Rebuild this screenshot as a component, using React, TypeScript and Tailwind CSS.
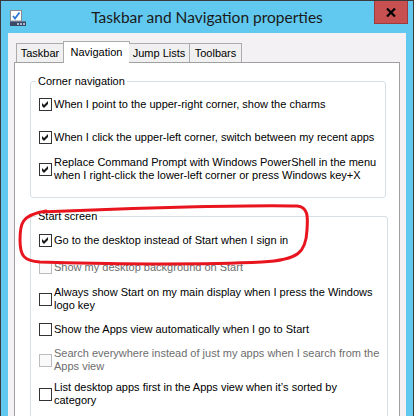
import React from "react";

const FONT = { fontFamily: '"Liberation Sans", Arial, sans-serif' };

function Check({ checked = false, disabled = false }: { checked?: boolean; disabled?: boolean }) {
  return (
    <span
      className={
        disabled
          ? "w-[13px] h-[13px] shrink-0 border border-[#bcbcbc] bg-[#fafafa] flex items-center justify-center"
          : "w-[13px] h-[13px] shrink-0 border border-[#333333] bg-white flex items-center justify-center"
      }
    >
      {checked && (
        <svg width="11" height="11" viewBox="0 0 11 11">
          <polygon points="2,4 4,6 8,2 8,5 4,9 2,7" fill="#1a1a1a" />
        </svg>
      )}
    </span>
  );
}

function Row({
  children,
  checked,
  disabled,
  className,
}: {
  children: React.ReactNode;
  checked?: boolean;
  disabled?: boolean;
  className?: string;
}) {
  return (
    <div className={"flex items-center gap-[2px] " + (className ?? "")}>
      <Check checked={checked} disabled={disabled} />
      <span
        className={
          disabled
            ? "text-[11px] leading-[13px] text-[#6d6d6d] whitespace-nowrap"
            : "text-[11px] leading-[13px] text-black whitespace-nowrap"
        }
      >
        {children}
      </span>
    </div>
  );
}

export default function App() {
  return (
    <div className="relative w-[414px] h-[416px] overflow-hidden" style={FONT}>
      <div className="flex flex-col h-full bg-[#61c8ef] border-x border-t border-[#3a3a3a]">
        {/* Title bar */}
        <div className="h-[32px] grid grid-cols-[1fr_auto_1fr] shrink-0">
          <div className="pl-[9px] pt-[9px]">
            <svg width="16" height="16" viewBox="0 0 16 16">
              <rect x="0.5" y="0.5" width="11" height="10.5" fill="#ffffff" stroke="#8c8c8c" />
              <polyline points="3,6 5,8.5 9.5,2.5" fill="none" stroke="#2b78d4" strokeWidth="1.8" />
              <rect x="0" y="11" width="16" height="5" fill="#3b4a66" />
              <rect x="0" y="11" width="16" height="1" fill="#6a7a96" />
              <rect x="7" y="13" width="2" height="2" fill="#a9b6cc" />
              <rect x="10" y="13" width="2" height="2" fill="#a9b6cc" />
              <rect x="13" y="13" width="2" height="2" fill="#a9b6cc" />
            </svg>
          </div>
          <div
            className="pt-[6px] text-[15.5px] leading-[20px] text-[#1a1a1a] whitespace-nowrap"
            style={{ fontFamily: 'Lato, "Noto Sans", sans-serif' }}
          >
            Taskbar and Navigation properties
          </div>
          <div className="flex justify-end pr-[5px]">
            <div className="w-[34px] h-[23px] bg-[#c75050] border border-[#9b3b3b] border-t-0 flex items-center justify-center">
              <svg width="10" height="9" viewBox="0 0 10 9">
                <path d="M1 0.5 L9 8.5 M9 0.5 L1 8.5" stroke="#000" strokeWidth="2.2" />
              </svg>
            </div>
          </div>
        </div>

        {/* Client */}
        <div className="flex-1 mx-[7px] bg-[#f4f1f4] px-[6px] pt-[8px] flex flex-col">
          {/* Tabs */}
          <div className="flex items-end pl-[2px] h-[21px] shrink-0 relative z-10">
            <div className="w-[48px] h-[19px] border-l border-t border-r border-[#acacac] bg-[#f0f0f0] flex items-center justify-center text-[11px] leading-[13px] text-black">
              Taskbar
            </div>
            <div className="w-[67px] h-[22px] -ml-px mb-[-1px] border-l border-t border-r border-[#acacac] bg-white flex items-center justify-center text-[11px] leading-[13px] text-black">
              Navigation
            </div>
            <div className="w-[61px] h-[19px] -ml-px border-t border-r border-[#acacac] bg-[#f0f0f0] flex items-center justify-center text-[11px] leading-[13px] text-black">
              Jump Lists
            </div>
            <div className="w-[52px] h-[19px] border-t border-r border-[#acacac] bg-[#f0f0f0] flex items-center justify-center text-[11px] leading-[13px] text-black">
              Toolbars
            </div>
          </div>

          {/* Panel */}
          <div className="flex-1 border border-[#a0a0a0] bg-white pl-[15px] pr-[13px] pt-[11px]">
            <fieldset className="border border-[#d5dfe5] rounded-[3px] px-[8px] pt-[10px] pb-[15px]">
              <legend className="ml-[-3px] px-[2px] text-[11px] leading-[14px] text-black">
                Corner navigation
              </legend>
              <Row checked>When I point to the upper-right corner, show the charms</Row>
              <Row checked className="mt-[20px]">
                When I click the upper-left corner, switch between my recent apps
              </Row>
              <Row checked className="mt-[12px]">
                Replace Command Prompt with Windows PowerShell in the menu
                <br />
                when I right-click the lower-left corner or press Windows key+X
              </Row>
            </fieldset>

            <fieldset className="mt-[11px] border border-[#d5dfe5] rounded-[3px] px-[8px] pt-[11px] pb-[15px]">
              <legend className="ml-[-3px] px-[2px] text-[11px] leading-[14px] text-black">
                Start screen
              </legend>
              <Row checked>Go to the desktop instead of Start when I sign in</Row>
              <Row disabled className="mt-[14px]">
                Show my desktop background on Start
              </Row>
              <Row className="mt-[12px]">
                Always show Start on my main display when I press the Windows
                <br />
                logo key
              </Row>
              <Row className="mt-[11px]">Show the Apps view automatically when I go to Start</Row>
              <Row disabled className="mt-[11px]">
                Search everywhere instead of just my apps when I search from the
                <br />
                Apps view
              </Row>
              <Row className="mt-[8px]">
                List desktop apps first in the Apps view when it’s sorted by
                <br />
                category
              </Row>
            </fieldset>
          </div>
        </div>
      </div>

      {/* Red annotation ellipse */}
      <svg
        className="absolute left-0 top-0 pointer-events-none"
        width="414"
        height="416"
        viewBox="0 0 414 416"
      >
        <path
          d="M 40 212 C 150 207, 260 205, 297 206 C 308 207, 308 216, 307 230 C 306 252, 299 260, 262 262 C 200 265, 100 264, 40 262 C 24 261, 20 256, 20 240 C 20 224, 21 215, 46 211"
          fill="none"
          stroke="#e8141e"
          strokeWidth="3"
          strokeLinecap="round"
        />
      </svg>
    </div>
  );
}
